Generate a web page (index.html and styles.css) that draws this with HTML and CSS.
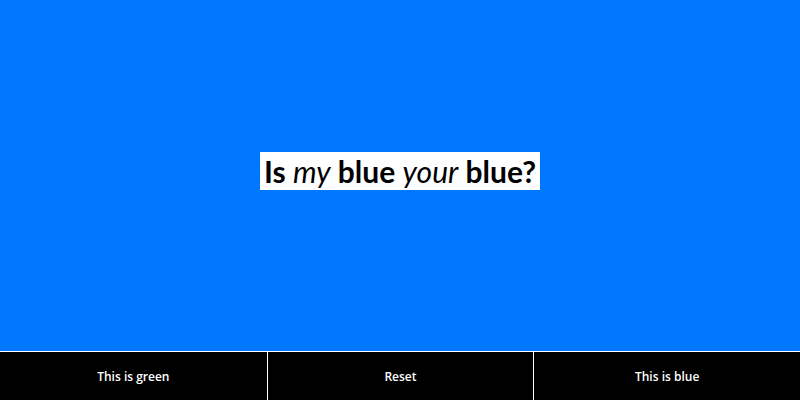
FILE: index.html
```html
<!DOCTYPE html>
<html>
<head>
<meta charset="utf-8">
<link rel="stylesheet" href="styles.css">
</head>
<body>
<main class="stage">
  <h1 class="question">Is <em>my</em> blue <em>your</em> blue?</h1>
</main>
<nav class="controls">
  <button class="control">This is green</button>
  <button class="control">Reset</button>
  <button class="control">This is blue</button>
</nav>
</body>
</html>
```

FILE: styles.css
```css
html, body {
  margin: 0;
  height: 100%;
}

body {
  display: flex;
  flex-direction: column;
  background: #0077ff;
  font-family: Lato, "Open Sans", sans-serif;
}

.stage {
  flex: 1;
  display: flex;
  align-items: center;
  justify-content: center;
}

.question {
  margin: 0 0 10px;
  padding: 0 4px;
  background: #fff;
  color: #000;
  font-size: 30px;
  font-weight: 700;
  line-height: 38px;
}

.question em {
  font-weight: 400;
}

.controls {
  display: grid;
  grid-template-columns: repeat(3, 1fr);
  height: 48px;
  border-top: 1px solid #fff;
  background: #000;
}

.control {
  background: #000;
  color: #fff;
  border: 0;
  border-left: 1px solid #fff;
  font-family: "Open Sans", sans-serif;
  font-size: 12px;
  font-weight: 600;
  padding: 0;
}

.control:first-child {
  border-left: 0;
}
```
